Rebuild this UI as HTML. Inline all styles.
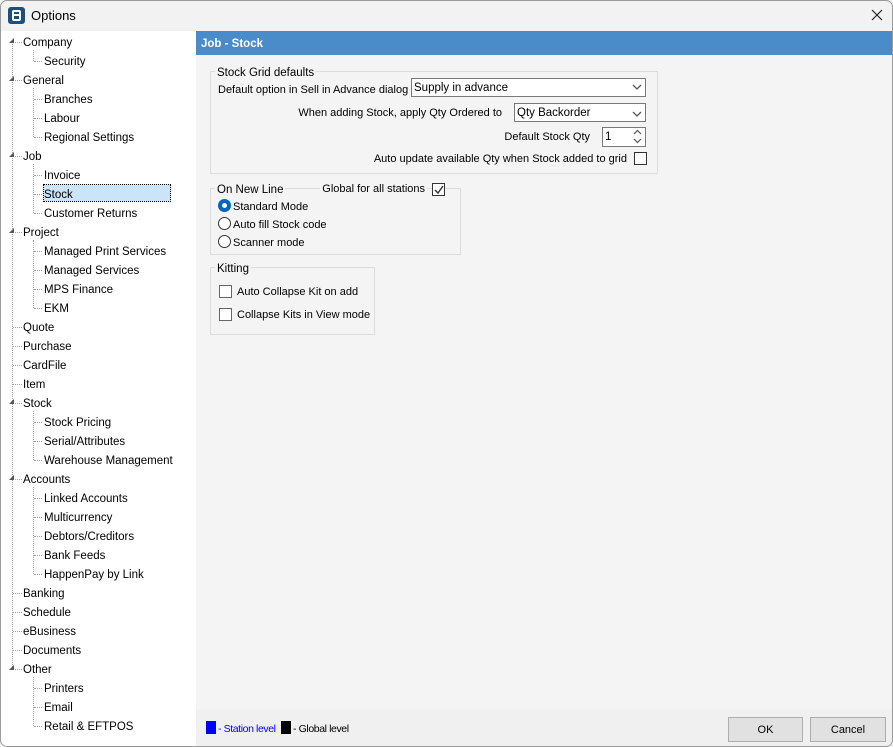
<!DOCTYPE html>
<html><head><meta charset="utf-8"><style>
*{margin:0;padding:0;box-sizing:border-box}
body{width:893px;height:747px;background:#f2f2f2;font-family:"Liberation Sans",sans-serif;font-size:11.5px;color:#000;position:relative;overflow:hidden}
.a{position:absolute;white-space:nowrap}
.t{position:absolute;height:16px;line-height:18px;white-space:nowrap}
.vl{position:absolute;border-left:1px dotted #a0a0a0;width:0}
.hl{position:absolute;border-top:1px dotted #a0a0a0;height:0}
.tri{position:absolute;width:0;height:0;border-left:5px solid transparent;border-bottom:5px solid #555}
.grp{position:absolute;border:1px solid #dcdcdc}
.cb{position:absolute;width:13px;height:13px;border:1px solid #333;background:#fff}
.rb{position:absolute;width:13px;height:13px;border:1px solid #333;border-radius:50%;background:#fff}
.combo{position:absolute;background:#fff;border:1px solid #7a7a7a;height:19px;line-height:18px;padding-left:2px}
.btn{position:absolute;border:1px solid #adadad;background:#e1e1e1;height:25px;line-height:24px;text-align:center}
</style></head><body>
<!-- title -->
<div class="a" style="left:8px;top:7px;width:17px;height:17px;background:#1d4f7d;border-radius:3px"></div>
<div class="a" style="left:12px;top:10px;width:9px;height:11px;border:2px solid #fff;border-radius:2px"></div>
<div class="a" style="left:12px;top:14px;width:9px;height:2px;background:#fff"></div>
<div class="a" style="left:31px;top:8px;font-size:13px">Options</div>
<svg class="a" style="left:871px;top:9px" width="12" height="12"><path d="M1 1L11 11M11 1L1 11" stroke="#222" stroke-width="1.2"/></svg>
<!-- tree -->
<div class="a" style="left:1px;top:31px;width:195px;height:716px;background:#fff"></div>
<div class="vl" style="left:12px;top:42px;height:627px"></div>
<div class="vl" style="left:33px;top:50px;height:11px"></div>
<div class="vl" style="left:33px;top:88px;height:49px"></div>
<div class="vl" style="left:33px;top:164px;height:49px"></div>
<div class="vl" style="left:33px;top:240px;height:68px"></div>
<div class="vl" style="left:33px;top:411px;height:49px"></div>
<div class="vl" style="left:33px;top:487px;height:87px"></div>
<div class="vl" style="left:33px;top:677px;height:49px"></div>
<div class="a" style="left:43px;top:184px;width:128px;height:18px;background:#cce4f7;border:1px dotted #000"></div>
<div class="tri" style="left:9px;top:38px"></div><div class="hl" style="left:15px;top:42px;width:7px"></div><div class="t" style="left:23px;top:34px">Company</div>
<div class="hl" style="left:34px;top:61px;width:8px"></div><div class="t" style="left:44px;top:53px">Security</div>
<div class="tri" style="left:9px;top:76px"></div><div class="hl" style="left:15px;top:80px;width:7px"></div><div class="t" style="left:23px;top:72px">General</div>
<div class="hl" style="left:34px;top:99px;width:8px"></div><div class="t" style="left:44px;top:91px">Branches</div>
<div class="hl" style="left:34px;top:118px;width:8px"></div><div class="t" style="left:44px;top:110px">Labour</div>
<div class="hl" style="left:34px;top:137px;width:8px"></div><div class="t" style="left:44px;top:129px">Regional Settings</div>
<div class="tri" style="left:9px;top:152px"></div><div class="hl" style="left:15px;top:156px;width:7px"></div><div class="t" style="left:23px;top:148px">Job</div>
<div class="hl" style="left:34px;top:175px;width:8px"></div><div class="t" style="left:44px;top:167px">Invoice</div>
<div class="hl" style="left:34px;top:194px;width:8px"></div><div class="t" style="left:44px;top:186px">Stock</div>
<div class="hl" style="left:34px;top:213px;width:8px"></div><div class="t" style="left:44px;top:205px">Customer Returns</div>
<div class="tri" style="left:9px;top:228px"></div><div class="hl" style="left:15px;top:232px;width:7px"></div><div class="t" style="left:23px;top:224px">Project</div>
<div class="hl" style="left:34px;top:251px;width:8px"></div><div class="t" style="left:44px;top:243px">Managed Print Services</div>
<div class="hl" style="left:34px;top:270px;width:8px"></div><div class="t" style="left:44px;top:262px">Managed Services</div>
<div class="hl" style="left:34px;top:289px;width:8px"></div><div class="t" style="left:44px;top:281px">MPS Finance</div>
<div class="hl" style="left:34px;top:308px;width:8px"></div><div class="t" style="left:44px;top:300px">EKM</div>
<div class="hl" style="left:13px;top:327px;width:9px"></div><div class="t" style="left:23px;top:319px">Quote</div>
<div class="hl" style="left:13px;top:346px;width:9px"></div><div class="t" style="left:23px;top:338px">Purchase</div>
<div class="hl" style="left:13px;top:365px;width:9px"></div><div class="t" style="left:23px;top:357px">CardFile</div>
<div class="hl" style="left:13px;top:384px;width:9px"></div><div class="t" style="left:23px;top:376px">Item</div>
<div class="tri" style="left:9px;top:399px"></div><div class="hl" style="left:15px;top:403px;width:7px"></div><div class="t" style="left:23px;top:395px">Stock</div>
<div class="hl" style="left:34px;top:422px;width:8px"></div><div class="t" style="left:44px;top:414px">Stock Pricing</div>
<div class="hl" style="left:34px;top:441px;width:8px"></div><div class="t" style="left:44px;top:433px">Serial/Attributes</div>
<div class="hl" style="left:34px;top:460px;width:8px"></div><div class="t" style="left:44px;top:452px">Warehouse Management</div>
<div class="tri" style="left:9px;top:475px"></div><div class="hl" style="left:15px;top:479px;width:7px"></div><div class="t" style="left:23px;top:471px">Accounts</div>
<div class="hl" style="left:34px;top:498px;width:8px"></div><div class="t" style="left:44px;top:490px">Linked Accounts</div>
<div class="hl" style="left:34px;top:517px;width:8px"></div><div class="t" style="left:44px;top:509px">Multicurrency</div>
<div class="hl" style="left:34px;top:536px;width:8px"></div><div class="t" style="left:44px;top:528px">Debtors/Creditors</div>
<div class="hl" style="left:34px;top:555px;width:8px"></div><div class="t" style="left:44px;top:547px">Bank Feeds</div>
<div class="hl" style="left:34px;top:574px;width:8px"></div><div class="t" style="left:44px;top:566px">HappenPay by Link</div>
<div class="hl" style="left:13px;top:593px;width:9px"></div><div class="t" style="left:23px;top:585px">Banking</div>
<div class="hl" style="left:13px;top:612px;width:9px"></div><div class="t" style="left:23px;top:604px">Schedule</div>
<div class="hl" style="left:13px;top:631px;width:9px"></div><div class="t" style="left:23px;top:623px">eBusiness</div>
<div class="hl" style="left:13px;top:650px;width:9px"></div><div class="t" style="left:23px;top:642px">Documents</div>
<div class="tri" style="left:9px;top:665px"></div><div class="hl" style="left:15px;top:669px;width:7px"></div><div class="t" style="left:23px;top:661px">Other</div>
<div class="hl" style="left:34px;top:688px;width:8px"></div><div class="t" style="left:44px;top:680px">Printers</div>
<div class="hl" style="left:34px;top:707px;width:8px"></div><div class="t" style="left:44px;top:699px">Email</div>
<div class="hl" style="left:34px;top:726px;width:8px"></div><div class="t" style="left:44px;top:718px">Retail &amp; EFTPOS</div>
<!-- right panel -->
<div class="a" style="left:196px;top:31px;width:697px;height:679px;background:#f4f4f4"></div>
<div class="a" style="left:196px;top:31px;width:697px;height:24px;background:#4a8cc9;color:#fff;font-weight:bold;font-size:11.5px;line-height:26px;padding-left:5px">Job - Stock</div>
<!-- group 1 -->
<div class="grp" style="left:210px;top:71px;width:448px;height:103px"></div>
<div class="t" style="left:215px;top:64px;background:#f4f4f4;padding:0 2px">Stock Grid defaults</div>
<div class="t" style="left:218px;top:81px;font-size:11px">Default option in Sell in Advance dialog</div>
<div class="combo" style="left:411px;top:78px;width:235px">Supply in advance</div>
<svg class="a" style="left:632px;top:84px" width="10" height="7"><path d="M1 1L5 5L9 1" fill="none" stroke="#555" stroke-width="1.3"/></svg>
<div class="t" style="right:391px;top:104px;font-size:11px">When adding Stock, apply Qty Ordered to</div>
<div class="combo" style="left:514px;top:103px;width:132px">Qty Backorder</div>
<div class="a" style="left:632px;top:109px"><svg width="10" height="7"><path d="M1 1L5 5L9 1" fill="none" stroke="#555" stroke-width="1.3"/></svg></div>
<div class="t" style="right:303px;top:128px;font-size:11px">Default Stock Qty</div>
<div class="combo" style="left:602px;top:127px;width:44px;height:20px">1</div>
<svg class="a" style="left:633px;top:129px" width="9" height="16"><path d="M1 5L4.5 1.5L8 5M1 10L4.5 13.5L8 10" fill="none" stroke="#555" stroke-width="1.2"/></svg>
<div class="t" style="right:266px;top:150px;font-size:11px">Auto update available Qty when Stock added to grid</div>
<div class="cb" style="left:634px;top:152px"></div>
<!-- group 2 -->
<div class="grp" style="left:210px;top:188px;width:251px;height:67px"></div>
<div class="t" style="left:215px;top:181px;background:#f4f4f4;padding:0 2px">On New Line</div>
<div class="t" style="right:466px;top:180px;background:#f4f4f4;padding:0 2px;font-size:11px">Global for all stations</div>
<div class="cb" style="left:432px;top:183px"></div>
<svg class="a" style="left:433px;top:184px" width="12" height="12"><path d="M2 6L5 9L10 2" fill="none" stroke="#333" stroke-width="1.4"/></svg>
<div class="rb" style="left:218px;top:199px;border:4px solid #0067c0"></div>
<div class="t" style="left:233px;top:198px;font-size:11px">Standard Mode</div>
<div class="rb" style="left:218px;top:217px"></div>
<div class="t" style="left:233px;top:216px;font-size:11px">Auto fill Stock code</div>
<div class="rb" style="left:218px;top:235px"></div>
<div class="t" style="left:233px;top:234px;font-size:11px">Scanner mode</div>
<!-- group 3 -->
<div class="grp" style="left:210px;top:267px;width:165px;height:68px"></div>
<div class="t" style="left:215px;top:260px;background:#f4f4f4;padding:0 2px">Kitting</div>
<div class="cb" style="left:219px;top:285px;border-color:#666"></div>
<div class="t" style="left:237px;top:283px;font-size:11px">Auto Collapse Kit on add</div>
<div class="cb" style="left:219px;top:308px;border-color:#666"></div>
<div class="t" style="left:237px;top:306px;font-size:11px">Collapse Kits in View mode</div>
<!-- footer -->
<div class="a" style="left:196px;top:710px;width:697px;height:37px;background:#f0f0f0"></div>
<div class="a" style="left:206px;top:721px;width:10px;height:13px;background:#0000ff"></div>
<div class="t" style="left:218px;top:720px;color:#0000ff;font-size:10.5px;letter-spacing:-0.4px">- Station level</div>
<div class="a" style="left:281px;top:721px;width:10px;height:13px;background:#000"></div>
<div class="t" style="left:293px;top:720px;font-size:10.5px;letter-spacing:-0.4px">- Global level</div>
<div class="btn" style="left:728px;top:717px;width:75px;font-size:11px">OK</div>
<div class="btn" style="left:810px;top:717px;width:76px;font-size:11px">Cancel</div>
<!-- window border overlay -->
<div class="a" style="left:0;top:0;width:893px;height:747px;border:1px solid #9a9a9a;border-radius:7px;pointer-events:none"></div>
</body></html>
